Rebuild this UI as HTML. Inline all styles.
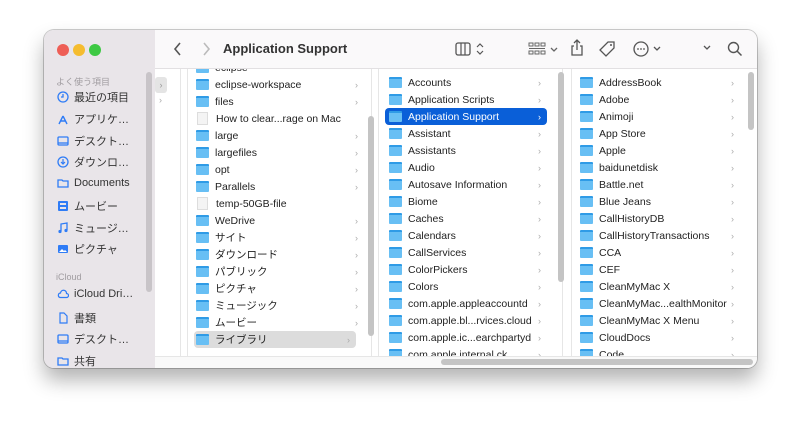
<!DOCTYPE html>
<html><head><meta charset="utf-8"><style>
*{box-sizing:border-box;margin:0;padding:0}
body{width:800px;height:425px;background:#fff;font-family:"Liberation Sans","Noto Sans CJK JP",sans-serif;position:relative;overflow:hidden}
.win{position:absolute;left:44px;top:30px;width:713px;height:338px;border-radius:10px;background:#fff;overflow:hidden;box-shadow:0 12px 20px rgba(0,0,0,.3),0 0 0 1px rgba(0,0,0,.2)}
.side{position:absolute;left:0;top:0;width:111px;height:338px;background:#e9e5e9}
.dot{position:absolute;top:14px;width:12px;height:12px;border-radius:6px}
.sh{position:absolute;left:12px;font-size:9px;color:#a09ca0}
.si{position:absolute;left:13px;font-size:11px;color:#333;display:flex;align-items:center;gap:5px}
.ic{width:12px;height:12px;display:inline-block}
.tb{position:absolute;left:111px;top:0;right:0;height:39px;background:#faf9fa;border-bottom:1px solid #e2e0e2}
.title{position:absolute;left:68px;top:11px;font-size:13px;font-weight:bold;color:#333}
.col{position:absolute;top:39px;height:299px;overflow:hidden}
.row{position:absolute;height:17px;font-size:10.5px;color:#222;display:flex;align-items:center;white-space:nowrap}
.row .f{width:13px;height:11px;background:#68bff4;border-top:2px solid #2f9be6;border-radius:1px;margin-right:6px;flex:none}
.row .d{width:11px;height:13px;background:#f4f4f4;border:1px solid #ddd;margin:0 8px 0 1px;flex:none}
.row .a{position:absolute;right:6px;color:#aaa;font-size:9px}
.sel{background:#0a5fd8;color:#fff;border-radius:4px}
.sel .a{color:#fff}
.sb{position:absolute;width:6px;border-radius:3px;background:#c4c4c4}
.div{position:absolute;top:39px;width:1px;height:290px;background:#e6e6e6}
svg{display:block}
</style></head><body>
<div class="win">
<div class="side">
<div class="dot" style="left:13px;background:#ee5e56"></div>
<div class="dot" style="left:29px;background:#f5bc2f"></div>
<div class="dot" style="left:45px;background:#3ec944"></div>
<div class="sh" style="top:45px">よく使う項目</div>
<div class="si" style="top:59px"><svg class="ic" viewBox="0 0 12 12"><circle cx="6" cy="6" r="5" fill="none" stroke="#2f7cf6" stroke-width="1.3"/><path d="M6 3v3H4" fill="none" stroke="#2f7cf6" stroke-width="1.3"/></svg>最近の項目</div>
<div class="si" style="top:81px"><svg class="ic" viewBox="0 0 12 12"><path d="M2 11L6 3M10 11L6 3M3 8h6" fill="none" stroke="#2f7cf6" stroke-width="1.4"/></svg>アプリケ…</div>
<div class="si" style="top:103px"><svg class="ic" viewBox="0 0 12 12"><rect x="1" y="2" width="10" height="8" rx="1" fill="none" stroke="#2f7cf6" stroke-width="1.3"/><path d="M1 8h10" stroke="#2f7cf6" stroke-width="1.3"/></svg>デスクト…</div>
<div class="si" style="top:124px"><svg class="ic" viewBox="0 0 12 12"><circle cx="6" cy="6" r="5" fill="none" stroke="#2f7cf6" stroke-width="1.3"/><path d="M6 3v5M4 6l2 2 2-2" fill="none" stroke="#2f7cf6" stroke-width="1.2"/></svg>ダウンロ…</div>
<div class="si" style="top:147px"><svg class="ic" viewBox="0 0 12 12"><path d="M1 3h4l1 1h5v6H1z" fill="none" stroke="#2f7cf6" stroke-width="1.3"/></svg>Documents</div>
<div class="si" style="top:168px"><svg class="ic" viewBox="0 0 12 12"><rect x="1" y="1" width="10" height="10" rx="1" fill="#2f7cf6"/><rect x="3" y="3" width="6" height="2" fill="#e9e5e9"/><rect x="3" y="7" width="6" height="2" fill="#e9e5e9"/></svg>ムービー</div>
<div class="si" style="top:190px"><svg class="ic" viewBox="0 0 12 12"><path d="M4 9V2l6-1v7" fill="none" stroke="#2f7cf6" stroke-width="1.3"/><circle cx="3" cy="9.5" r="1.6" fill="#2f7cf6"/><circle cx="9" cy="8.5" r="1.6" fill="#2f7cf6"/></svg>ミュージ…</div>
<div class="si" style="top:211px"><svg class="ic" viewBox="0 0 12 12"><rect x="1" y="2" width="10" height="8" rx="1" fill="#2f7cf6"/><path d="M2 9l3-3 2 2 1-1 2 2z" fill="#fff"/></svg>ピクチャ</div>
<div class="sh" style="top:242px">iCloud</div>
<div class="si" style="top:258px"><svg class="ic" viewBox="0 0 12 12"><path d="M3 9.5h6.5a2 2 0 0 0 0-4A3 3 0 0 0 3.5 5 2.3 2.3 0 0 0 3 9.5z" fill="none" stroke="#2f7cf6" stroke-width="1.2"/></svg>iCloud Dri…</div>
<div class="si" style="top:280px"><svg class="ic" viewBox="0 0 12 12"><path d="M3 1h4l3 3v7H3z" fill="none" stroke="#2f7cf6" stroke-width="1.2"/></svg>書類</div>
<div class="si" style="top:301px"><svg class="ic" viewBox="0 0 12 12"><rect x="1" y="2" width="10" height="8" rx="1" fill="none" stroke="#2f7cf6" stroke-width="1.3"/><path d="M1 8h10" stroke="#2f7cf6" stroke-width="1.3"/></svg>デスクト…</div>
<div class="si" style="top:323px"><svg class="ic" viewBox="0 0 12 12"><path d="M1 3h4l1 1h5v6H1z" fill="none" stroke="#2f7cf6" stroke-width="1.3"/></svg>共有</div>
<div class="sb" style="left:102px;top:42px;height:220px;background:#c8c4c8"></div>
</div>
<div class="tb">
<svg style="position:absolute;left:18px;top:12px" width="10" height="14" viewBox="0 0 10 14"><path d="M7 1L2 7l5 6" fill="none" stroke="#555" stroke-width="1.6"/></svg>
<svg style="position:absolute;left:46px;top:12px" width="10" height="14" viewBox="0 0 10 14"><path d="M3 1l5 6-5 6" fill="none" stroke="#bbb" stroke-width="1.6"/></svg>
<div class="title">Application Support</div>
<svg style="position:absolute;left:300px;top:12px" width="34" height="14" viewBox="0 0 34 14"><rect x="1" y="1" width="14" height="12" rx="2" fill="none" stroke="#555" stroke-width="1.3"/><path d="M6 1v12M10 1v12" stroke="#555" stroke-width="1.2"/><path d="M22 5l3-3 3 3M22 9l3 3 3-3" fill="none" stroke="#555" stroke-width="1.2"/></svg>
<svg style="position:absolute;left:373px;top:12px" width="34" height="14" viewBox="0 0 34 14"><g fill="none" stroke="#666" stroke-width="1"><rect x="1" y="1" width="4" height="3"/><rect x="7" y="1" width="4" height="3"/><rect x="13" y="1" width="4" height="3"/><rect x="1" y="9" width="4" height="3"/><rect x="7" y="9" width="4" height="3"/><rect x="13" y="9" width="4" height="3"/><path d="M1 6.5h16"/><path d="M23 6l3 3 3-3" stroke-width="1.3"/></g></svg>
<svg style="position:absolute;left:415px;top:9px" width="14" height="18" viewBox="0 0 14 18"><path d="M7 1v10M4 4l3-3 3 3M4 7H2v9h10V7h-2" fill="none" stroke="#555" stroke-width="1.3"/></svg>
<svg style="position:absolute;left:443px;top:10px" width="18" height="18" viewBox="0 0 18 18"><path d="M10 2h6v6l-8 8-6-6z" fill="none" stroke="#555" stroke-width="1.3"/><circle cx="13" cy="5" r="1" fill="#555"/></svg>
<svg style="position:absolute;left:478px;top:11px" width="34" height="16" viewBox="0 0 34 16"><circle cx="8" cy="8" r="7" fill="none" stroke="#555" stroke-width="1.3"/><circle cx="5" cy="8" r=".9" fill="#555"/><circle cx="8" cy="8" r=".9" fill="#555"/><circle cx="11" cy="8" r=".9" fill="#555"/><path d="M21 6l3 3 3-3" fill="none" stroke="#555" stroke-width="1.3"/></svg>
<svg style="position:absolute;left:547px;top:14px" width="10" height="8" viewBox="0 0 10 8"><path d="M2 2l3 3 3-3" fill="none" stroke="#555" stroke-width="1.3"/></svg>
<svg style="position:absolute;left:572px;top:11px" width="16" height="16" viewBox="0 0 16 16"><circle cx="6.5" cy="6.5" r="5" fill="none" stroke="#555" stroke-width="1.4"/><path d="M10 10l4.5 4.5" stroke="#555" stroke-width="1.5"/></svg>
</div>
<div style="position:absolute;left:111px;top:47px;width:12px;height:16px;background:#e4e4e4;border-radius:3px;color:#999;font-size:9px;text-align:center;line-height:16px">›</div>
<div style="position:absolute;left:115px;top:65px;color:#aaa;font-size:9px">›</div>
<div class="div" style="left:136px"></div>
<div class="div" style="left:143px"></div>
<div class="div" style="left:327px"></div>
<div class="div" style="left:334px"></div>
<div class="div" style="left:518px"></div>
<div class="div" style="left:527px"></div>
<div class="col" style="left:144px;width:183px">
<div class="row" style="left:8px;top:-10px;width:168px"><span class="f"></span>eclipse</div>
<div class="row" style="left:8px;top:7px;width:168px"><span class="f"></span>eclipse-workspace<span class="a">›</span></div>
<div class="row" style="left:8px;top:24px;width:168px"><span class="f"></span>files<span class="a">›</span></div>
<div class="row" style="left:8px;top:41px;width:168px"><span class="d"></span>How to clear...rage on Mac</div>
<div class="row" style="left:8px;top:58px;width:168px"><span class="f"></span>large<span class="a">›</span></div>
<div class="row" style="left:8px;top:75px;width:168px"><span class="f"></span>largefiles<span class="a">›</span></div>
<div class="row" style="left:8px;top:92px;width:168px"><span class="f"></span>opt<span class="a">›</span></div>
<div class="row" style="left:8px;top:109px;width:168px"><span class="f"></span>Parallels<span class="a">›</span></div>
<div class="row" style="left:8px;top:126px;width:168px"><span class="d"></span>temp-50GB-file</div>
<div class="row" style="left:8px;top:143px;width:168px"><span class="f"></span>WeDrive<span class="a">›</span></div>
<div class="row" style="left:8px;top:160px;width:168px"><span class="f"></span>サイト<span class="a">›</span></div>
<div class="row" style="left:8px;top:177px;width:168px"><span class="f"></span>ダウンロード<span class="a">›</span></div>
<div class="row" style="left:8px;top:194px;width:168px"><span class="f"></span>パブリック<span class="a">›</span></div>
<div class="row" style="left:8px;top:211px;width:168px"><span class="f"></span>ピクチャ<span class="a">›</span></div>
<div class="row" style="left:8px;top:228px;width:168px"><span class="f"></span>ミュージック<span class="a">›</span></div>
<div class="row" style="left:8px;top:245px;width:168px"><span class="f"></span>ムービー<span class="a">›</span></div>
<div class="row" style="left:6px;top:262px;width:162px;background:#dcdcdc;border-radius:4px;padding-left:2px"><span class="f"></span>ライブラリ<span class="a">›</span></div>
</div>
<div class="sb" style="left:324px;top:86px;height:220px"></div>
<div class="col" style="left:335px;width:183px">
<div class="row" style="left:10px;top:5px;width:158px"><span class="f"></span>Accounts<span class="a">›</span></div>
<div class="row" style="left:10px;top:22px;width:158px"><span class="f"></span>Application Scripts<span class="a">›</span></div>
<div class="row sel" style="left:6px;top:39px;width:162px;padding-left:4px"><span class="f"></span>Application Support<span class="a">›</span></div>
<div class="row" style="left:10px;top:56px;width:158px"><span class="f"></span>Assistant<span class="a">›</span></div>
<div class="row" style="left:10px;top:73px;width:158px"><span class="f"></span>Assistants<span class="a">›</span></div>
<div class="row" style="left:10px;top:90px;width:158px"><span class="f"></span>Audio<span class="a">›</span></div>
<div class="row" style="left:10px;top:107px;width:158px"><span class="f"></span>Autosave Information<span class="a">›</span></div>
<div class="row" style="left:10px;top:124px;width:158px"><span class="f"></span>Biome<span class="a">›</span></div>
<div class="row" style="left:10px;top:141px;width:158px"><span class="f"></span>Caches<span class="a">›</span></div>
<div class="row" style="left:10px;top:158px;width:158px"><span class="f"></span>Calendars<span class="a">›</span></div>
<div class="row" style="left:10px;top:175px;width:158px"><span class="f"></span>CallServices<span class="a">›</span></div>
<div class="row" style="left:10px;top:192px;width:158px"><span class="f"></span>ColorPickers<span class="a">›</span></div>
<div class="row" style="left:10px;top:209px;width:158px"><span class="f"></span>Colors<span class="a">›</span></div>
<div class="row" style="left:10px;top:226px;width:158px"><span class="f"></span>com.apple.appleaccountd<span class="a">›</span></div>
<div class="row" style="left:10px;top:243px;width:158px"><span class="f"></span>com.apple.bl...rvices.cloud<span class="a">›</span></div>
<div class="row" style="left:10px;top:260px;width:158px"><span class="f"></span>com.apple.ic...earchpartyd<span class="a">›</span></div>
<div class="row" style="left:10px;top:277px;width:158px"><span class="f"></span>com.apple.internal.ck<span class="a">›</span></div>
</div>
<div class="sb" style="left:514px;top:42px;height:210px"></div>
<div class="col" style="left:528px;width:185px">
<div class="row" style="left:8px;top:5px;width:160px"><span class="f"></span>AddressBook<span class="a">›</span></div>
<div class="row" style="left:8px;top:22px;width:160px"><span class="f"></span>Adobe<span class="a">›</span></div>
<div class="row" style="left:8px;top:39px;width:160px"><span class="f"></span>Animoji<span class="a">›</span></div>
<div class="row" style="left:8px;top:56px;width:160px"><span class="f"></span>App Store<span class="a">›</span></div>
<div class="row" style="left:8px;top:73px;width:160px"><span class="f"></span>Apple<span class="a">›</span></div>
<div class="row" style="left:8px;top:90px;width:160px"><span class="f"></span>baidunetdisk<span class="a">›</span></div>
<div class="row" style="left:8px;top:107px;width:160px"><span class="f"></span>Battle.net<span class="a">›</span></div>
<div class="row" style="left:8px;top:124px;width:160px"><span class="f"></span>Blue Jeans<span class="a">›</span></div>
<div class="row" style="left:8px;top:141px;width:160px"><span class="f"></span>CallHistoryDB<span class="a">›</span></div>
<div class="row" style="left:8px;top:158px;width:160px"><span class="f"></span>CallHistoryTransactions<span class="a">›</span></div>
<div class="row" style="left:8px;top:175px;width:160px"><span class="f"></span>CCA<span class="a">›</span></div>
<div class="row" style="left:8px;top:192px;width:160px"><span class="f"></span>CEF<span class="a">›</span></div>
<div class="row" style="left:8px;top:209px;width:160px"><span class="f"></span>CleanMyMac X<span class="a">›</span></div>
<div class="row" style="left:8px;top:226px;width:160px"><span class="f"></span>CleanMyMac...ealthMonitor<span class="a">›</span></div>
<div class="row" style="left:8px;top:243px;width:160px"><span class="f"></span>CleanMyMac X Menu<span class="a">›</span></div>
<div class="row" style="left:8px;top:260px;width:160px"><span class="f"></span>CloudDocs<span class="a">›</span></div>
<div class="row" style="left:8px;top:277px;width:160px"><span class="f"></span>Code<span class="a">›</span></div>
</div>
<div class="sb" style="left:704px;top:42px;height:58px"></div>
<div style="position:absolute;left:111px;top:326px;right:0;height:12px;background:#f9f9f9;border-top:1px solid #e6e6e6"></div>
<div style="position:absolute;left:397px;top:329px;width:312px;height:6px;border-radius:3px;background:#c4c4c4"></div>
</div>
</body></html>
